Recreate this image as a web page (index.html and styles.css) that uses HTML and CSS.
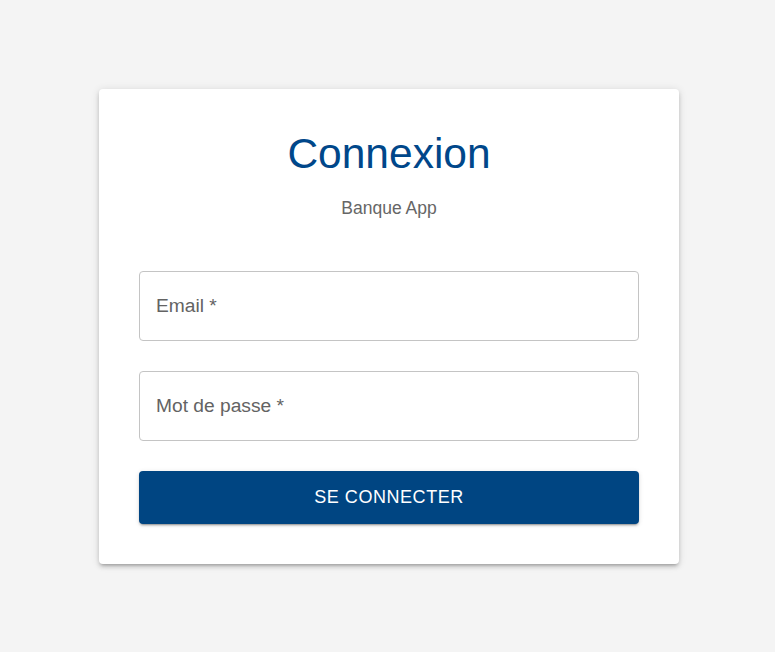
FILE: index.html
```
<!DOCTYPE html>
<html lang="fr">
<head>
<meta charset="utf-8">
<title>Connexion</title>
<link rel="stylesheet" href="styles.css">
</head>
<body>
<main class="page">
  <form class="card">
    <h1 class="title">Connexion</h1>
    <p class="subtitle">Banque App</p>
    <div class="fields">
      <input class="field" type="email" placeholder="Email *">
      <input class="field" type="password" placeholder="Mot de passe *">
      <button class="submit" type="button">SE CONNECTER</button>
    </div>
  </form>
</main>
</body>
</html>
```
FILE: styles.css
```
* { box-sizing: border-box; }
html, body { margin: 0; padding: 0; height: 100%; }
body {
  background: #f4f4f4;
  font-family: "Liberation Sans", Arial, sans-serif;
}
.page {
  height: 100%;
  display: flex;
  align-items: center;
  justify-content: center;
  padding-left: 3px;
}
.card {
  width: 580px;
  background: #fff;
  border-radius: 4px;
  padding: 40px;
  box-shadow: 0 3px 3px -2px rgba(0,0,0,0.2), 0 3px 4px 0 rgba(0,0,0,0.14), 0 1px 8px 0 rgba(0,0,0,0.12);
  display: flex;
  flex-direction: column;
}
.title {
  margin: 0;
  font-size: 42.5px;
  line-height: 50px;
  font-weight: 400;
  color: #00478a;
  text-align: center;
}
.subtitle {
  margin: 16px 0 0;
  font-size: 17.5px;
  line-height: 26px;
  color: #666;
  text-align: center;
}
.fields {
  margin-top: 50px;
  display: flex;
  flex-direction: column;
  gap: 30px;
}
.field {
  height: 70px;
  width: 100%;
  border: 1px solid #c4c4c4;
  border-radius: 4px;
  padding: 0 16px;
  font-family: inherit;
  font-size: 19.2px;
  color: #333;
  background: #fff;
  outline: none;
}
.field::placeholder { color: #636363; }
.submit {
  height: 53px;
  width: 100%;
  border: 0;
  border-radius: 4px;
  background: #004582;
  color: #fff;
  font-family: inherit;
  font-size: 18px;
  letter-spacing: 0.55px;
  box-shadow: 0 3px 1px -2px rgba(0,0,0,0.2), 0 2px 2px 0 rgba(0,0,0,0.14), 0 1px 5px 0 rgba(0,0,0,0.12);
  cursor: pointer;
}
```
